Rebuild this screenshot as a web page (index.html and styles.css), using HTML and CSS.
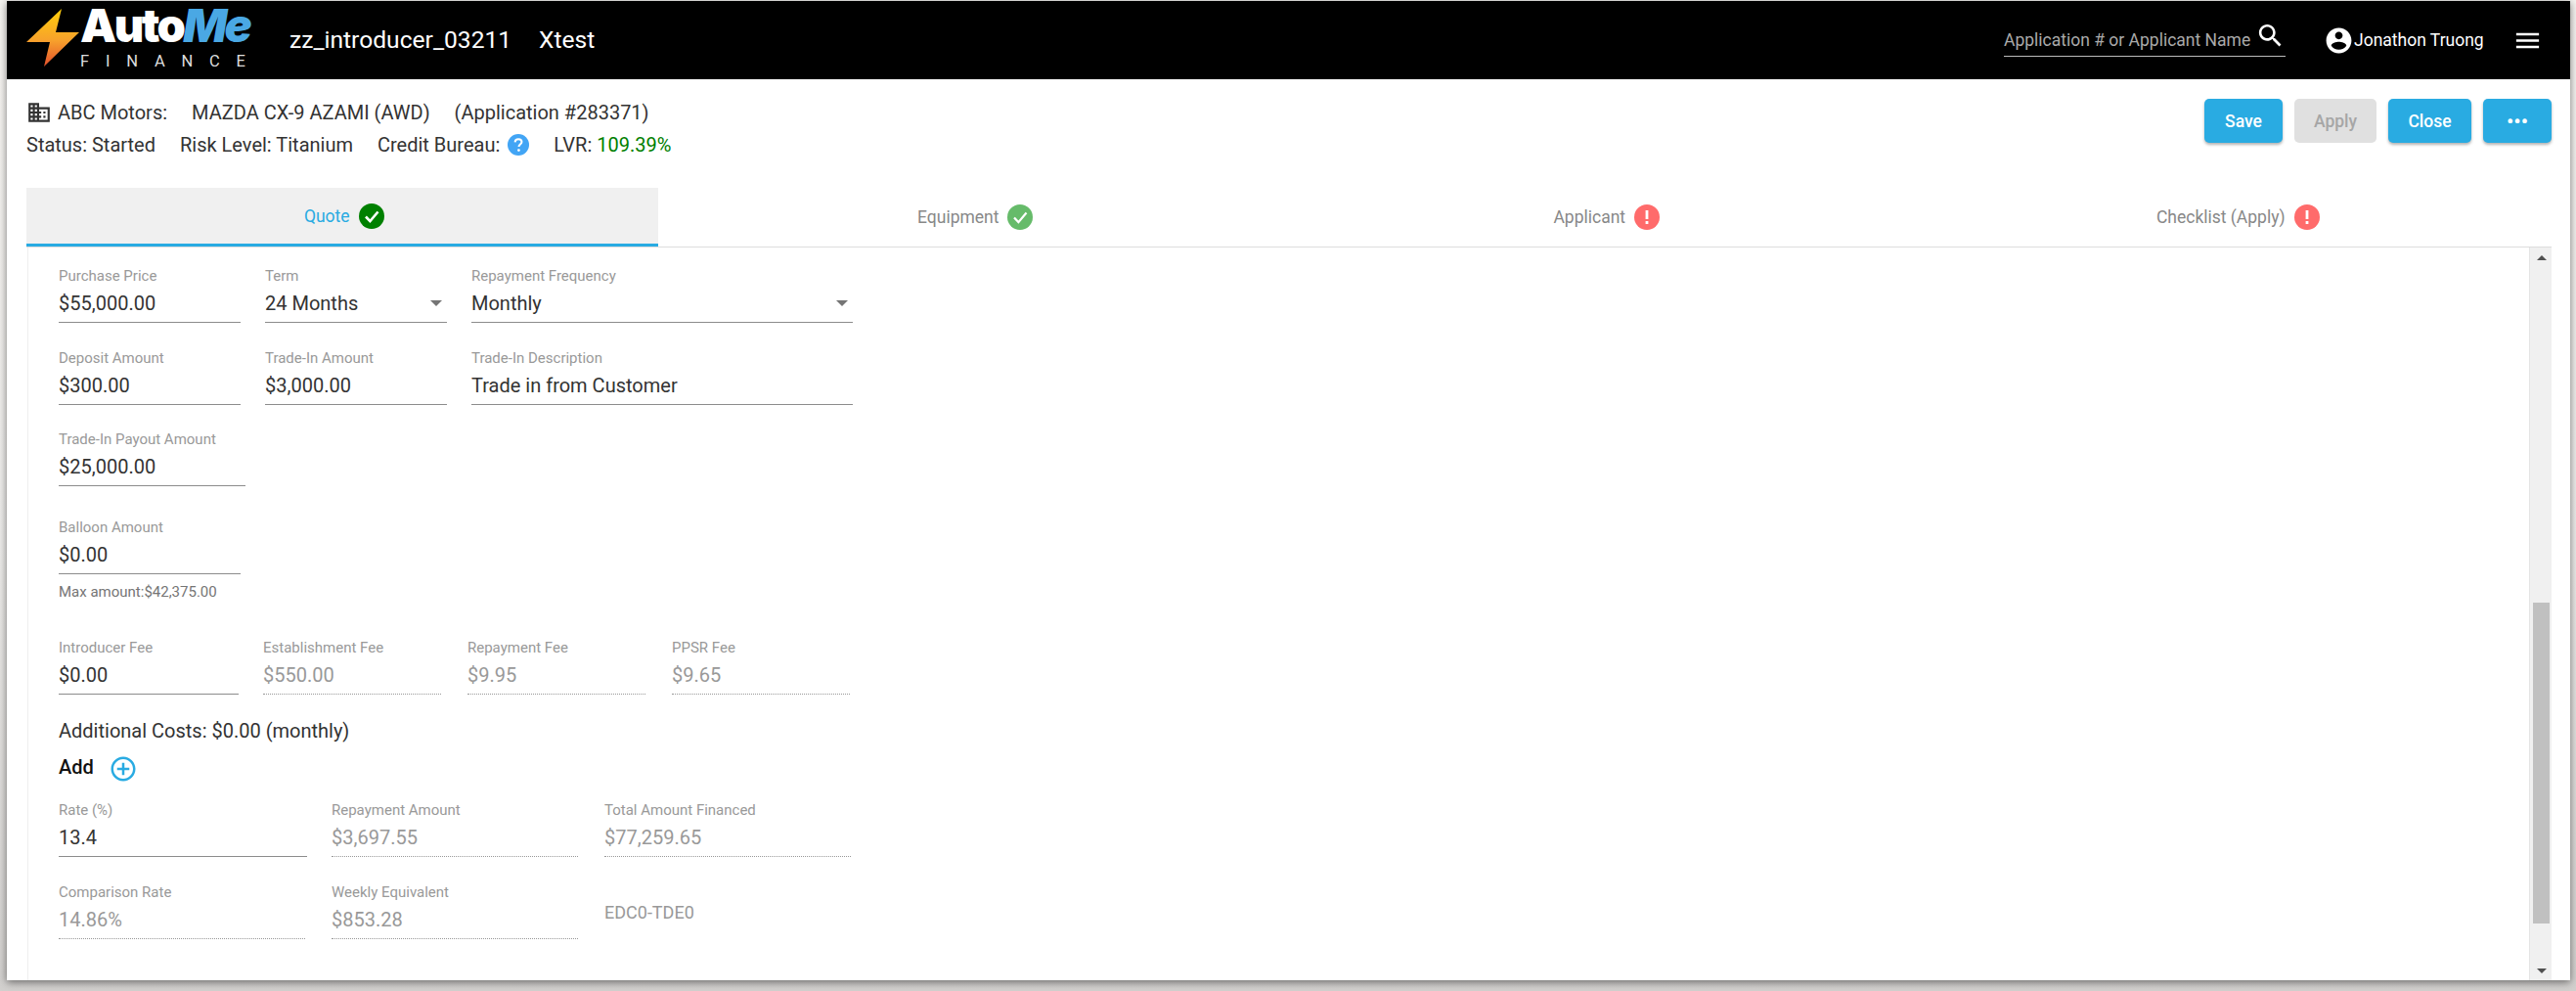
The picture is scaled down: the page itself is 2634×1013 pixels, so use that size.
FILE: index.html
```html
<!DOCTYPE html>
<html lang="en">
<head>
  <meta charset="UTF-8">
  <title>AutoMe Finance - Quote</title>
  <link rel="stylesheet" href="styles.css">
</head>
<body>
  <div class="modal">
    <header class="topbar">
      <div class="logo">
        <svg class="logo-bolt" width="54" height="60" viewBox="27 9 54 60">
          <defs>
            <linearGradient id="bolt" x1="0" y1="0" x2="0" y2="1">
              <stop offset="0" stop-color="#ffcf0a"/>
              <stop offset="0.55" stop-color="#f7a12c"/>
              <stop offset="1" stop-color="#e4502c"/>
            </linearGradient>
          </defs>
          <polygon points="63,9 27,43 51,43 45,68 81,33 57,33" fill="url(#bolt)"/>
        </svg>
        <div class="logo-text">
          <div class="logo-name">Auto<span class="logo-me">Me</span></div>
          <div class="logo-sub">FINANCE</div>
        </div>
      </div>
      <div class="topbar-title">zz_introducer_03211</div>
      <div class="topbar-title topbar-env">Xtest</div>

      <div class="search">
        <span class="search-text">Application # or Applicant Name</span>
        <svg class="search-icon" width="31" height="31" viewBox="0 0 24 24"><path fill="#fff" d="M15.5 14h-.79l-.28-.27C15.41 12.59 16 11.11 16 9.5 16 5.91 13.09 3 9.5 3S3 5.91 3 9.5 5.91 16 9.5 16c1.61 0 3.09-.59 4.23-1.57l.27.28v.79l5 4.99L20.49 19l-4.99-5zm-6 0C7.01 14 5 11.99 5 9.5S7.01 5 9.5 5 14 7.01 14 9.5 11.99 14 9.5 14z"/></svg>
      </div>
      <div class="user">
        <svg width="31" height="31" viewBox="0 0 24 24"><path fill="#fff" d="M12 2C6.48 2 2 6.48 2 12s4.48 10 10 10 10-4.48 10-10S17.52 2 12 2zm0 3c1.66 0 3 1.34 3 3s-1.34 3-3 3-3-1.34-3-3 1.34-3 3-3zm0 14.2c-2.5 0-4.71-1.28-6-3.22.03-1.99 4-3.08 6-3.08 1.99 0 5.97 1.09 6 3.08-1.29 1.94-3.5 3.22-6 3.22z"/></svg>
        <span>Jonathon Truong</span>
      </div>
      <svg class="menu-icon" width="31" height="31" viewBox="0 0 24 24"><path fill="#fff" d="M3 18h18v-2H3v2zm0-5h18v-2H3v2zm0-7v2h18V6H3z"/></svg>
    </header>

    <section class="info">
      <div class="info-text">
        <div class="info-title">
          <svg width="26" height="26" viewBox="0 0 24 24"><path fill="#333" d="M12 7V3H2v18h20V7H12zM6 19H4v-2h2v2zm0-4H4v-2h2v2zm0-4H4V9h2v2zm0-4H4V5h2v2zm4 12H8v-2h2v2zm0-4H8v-2h2v2zm0-4H8V9h2v2zm0-4H8V5h2v2zm10 12h-8v-2h2v-2h-2v-2h2v-2h-2V9h8v10zm-2-8h-2v2h2v-2zm0 4h-2v2h2v-2z"/></svg>
          <span class="dealer">ABC Motors:</span>
          <span class="vehicle">MAZDA CX-9 AZAMI (AWD)</span>
          <span class="app-no">(Application #283371)</span>
        </div>
        <div class="info-status">
          <span>Status: Started</span>
          <span>Risk Level: Titanium</span>
          <span class="bureau">Credit Bureau:
            <svg class="help-icon" width="22" height="22" viewBox="0 0 22 22">
              <circle cx="11" cy="11" r="11" fill="#42a5f5"/>
              <path d="M7.6 8.4c.1-2 1.5-3.2 3.5-3.2s3.4 1.2 3.4 2.9c0 2.4-3 2.6-3 5" fill="none" stroke="#fff" stroke-width="2"/>
              <circle cx="11.4" cy="16.6" r="1.4" fill="#fff"/>
            </svg>
          </span>
          <span>LVR: <span class="lvr">109.39%</span></span>
        </div>
      </div>
      <div class="actions">
        <button class="btn btn-save">Save</button>
        <button class="btn btn-apply" disabled>Apply</button>
        <button class="btn btn-close">Close</button>
        <button class="btn btn-more">•••</button>
      </div>
    </section>

    <nav class="tabs">
      <div class="tab tab-active">Quote
        <svg width="26" height="26" viewBox="0 0 26 26"><circle cx="13" cy="13" r="13" fill="#008000"/><path d="M7 13.5l4.4 4.6L19.5 8.5" fill="none" stroke="#fff" stroke-width="2.6"/></svg>
      </div>
      <div class="tab">Equipment
        <svg width="26" height="26" viewBox="0 0 26 26"><circle cx="13" cy="13" r="13" fill="#66bb6a"/><path d="M7 13.5l4.4 4.6L19.5 8.5" fill="none" stroke="#fff" stroke-width="2.2"/></svg>
      </div>
      <div class="tab">Applicant
        <svg width="26" height="26" viewBox="0 0 26 26"><circle cx="13" cy="13" r="13" fill="#ff6b6b"/><rect x="11.6" y="6" width="2.8" height="9" fill="#fff"/><rect x="11.6" y="17" width="2.8" height="3" fill="#fff"/></svg>
      </div>
      <div class="tab">Checklist (Apply)
        <svg width="26" height="26" viewBox="0 0 26 26"><circle cx="13" cy="13" r="13" fill="#ff6b6b"/><rect x="11.6" y="6" width="2.8" height="9" fill="#fff"/><rect x="11.6" y="17" width="2.8" height="3" fill="#fff"/></svg>
      </div>
    </nav>

    <div class="panel">
      <main class="form">
        <div class="row row-first">
          <div class="field"><label>Purchase Price</label><div class="value">$55,000.00</div></div>
          <div class="field"><label>Term</label><div class="value value-select">24 Months<span class="caret"></span></div></div>
          <div class="field"><label>Repayment Frequency</label><div class="value value-select">Monthly<span class="caret"></span></div></div>
        </div>
        <div class="row row-first row-tight">
          <div class="field"><label>Deposit Amount</label><div class="value">$300.00</div></div>
          <div class="field"><label>Trade-In Amount</label><div class="value">$3,000.00</div></div>
          <div class="field"><label>Trade-In Description</label><div class="value">Trade in from Customer</div></div>
        </div>
        <div class="row row-payout">
          <div class="field"><label>Trade-In Payout Amount</label><div class="value">$25,000.00</div></div>
        </div>
        <div class="row row-balloon">
          <div class="field"><label>Balloon Amount</label><div class="value">$0.00</div><div class="helper">Max amount:$42,375.00</div></div>
        </div>
        <div class="row row-fees">
          <div class="field"><label>Introducer Fee</label><div class="value">$0.00</div></div>
          <div class="field"><label>Establishment Fee</label><div class="value value-off">$550.00</div></div>
          <div class="field"><label>Repayment Fee</label><div class="value value-off">$9.95</div></div>
          <div class="field"><label>PPSR Fee</label><div class="value value-off">$9.65</div></div>
        </div>
        <div class="costs">Additional Costs: $0.00 (monthly)</div>
        <div class="add">Add
          <svg width="30" height="30" viewBox="0 0 24 24"><path fill="#29abe2" d="M13 7h-2v4H7v2h4v4h2v-4h4v-2h-4V7zm-1-5C6.48 2 2 6.48 2 12s4.48 10 10 10 10-4.48 10-10S17.52 2 12 2zm0 18c-4.41 0-8-3.59-8-8s3.59-8 8-8 8 3.59 8 8-3.59 8-8 8z"/></svg>
        </div>
        <div class="row row-rates">
          <div class="field"><label>Rate (%)</label><div class="value">13.4</div></div>
          <div class="field"><label>Repayment Amount</label><div class="value value-off">$3,697.55</div></div>
          <div class="field"><label>Total Amount Financed</label><div class="value value-off">$77,259.65</div></div>
        </div>
        <div class="row row-rates row-tight">
          <div class="field"><label>Comparison Rate</label><div class="value value-off">14.86%</div></div>
          <div class="field"><label>Weekly Equivalent</label><div class="value value-off">$853.28</div></div>
          <div class="code">EDC0-TDE0</div>
        </div>
      </main>
      <div class="scrollbar">
        <span class="arrow arrow-up"></span>
        <div class="thumb"></div>
        <span class="arrow arrow-down"></span>
      </div>
    </div>
  </div>
</body>
</html>
```

FILE: styles.css
```css
* {
  box-sizing: border-box;
}

html, body {
  margin: 0;
  height: 100%;
}

body {
  font-family: Roboto, "Liberation Sans", sans-serif;
  width: 2634px;
  height: 1013px;
  padding: 1px 6px 11px 7px;
  background: linear-gradient(#f5f3f0, #ecebe9 55%, #d2d0ce);
  overflow: hidden;
}

.modal {
  height: 1001px;
  background: #fff;
  display: flex;
  flex-direction: column;
  box-shadow: 0 2px 8px rgba(0,0,0,0.5);
}

/* top bar */
.topbar {
  height: 80px;
  flex: none;
  background: #000;
  color: #fff;
  display: flex;
  align-items: center;
  padding: 0 28px 0 20px;
}

.logo {
  display: flex;
  align-items: flex-start;
  height: 60px;
  width: 269px;
  margin-top: -4px;
}

.logo-bolt {
  flex: none;
}

.logo-text {
  margin-left: 1px;
}

.logo-name {
  font-family: Inter, Roboto, sans-serif;
  font-weight: 900;
  font-size: 47px;
  line-height: 34px;
  letter-spacing: -2.6px;
  color: #fff;
}

.logo-me {
  color: #4aa8e4;
  font-style: italic;
}

.logo-sub {
  font-size: 16.5px;
  line-height: 12px;
  margin-top: 14px;
  letter-spacing: 16.8px;
  color: #ddd;
  white-space: nowrap;
}

.topbar-title {
  font-size: 24.6px;
  line-height: 30px;
}

.topbar-env {
  margin-left: 28px;
}

.search {
  margin-left: auto;
  width: 288px;
  height: 34px;
  border-bottom: 1px solid #bbb;
  display: flex;
  align-items: flex-start;
  color: #aaa;
  font-size: 17.5px;
  line-height: 34px;
}

.search-text {
  flex: 1;
  white-space: nowrap;
}

.search-icon {
  margin-top: -3px;
}

.user {
  margin-left: 39px;
  display: flex;
  align-items: center;
  font-size: 17.5px;
  width: 176px;
}

.menu-icon {
  margin-left: 17px;
}

/* info strip */
.info {
  height: 111px;
  flex: none;
  display: flex;
  justify-content: space-between;
  padding: 20px 19px 0 20px;
}

.info-title {
  display: flex;
  align-items: center;
  height: 28px;
  font-size: 20px;
  color: #333;
}

.info-title svg {
  margin-right: 6px;
}

.vehicle {
  margin-left: 25px;
}

.app-no {
  margin-left: 25px;
}

.info-status {
  display: flex;
  align-items: center;
  height: 26px;
  margin-top: 6px;
  gap: 25px;
  font-size: 20px;
  color: #333;
}

.bureau {
  display: flex;
  align-items: center;
  gap: 8px;
}

.lvr {
  color: #008000;
}

.actions {
  display: flex;
  gap: 12px;
}

.btn {
  height: 45px;
  border: none;
  border-radius: 5px;
  font-family: inherit;
  font-size: 17.5px;
  font-weight: 500;
  color: #fff;
  background: #29abe2;
  box-shadow: 0 2px 3px rgba(0,0,0,0.3);
  padding: 0;
}

.btn-save {
  width: 80px;
}

.btn-apply {
  width: 84px;
  background: #e0e0e0;
  color: #a6a6a6;
  box-shadow: none;
}

.btn-close {
  width: 85px;
}

.btn-more {
  width: 70px;
  font-size: 21px;
}

/* tabs */
.tabs {
  margin: 0 19px 0 20px;
  display: grid;
  grid-template-columns: repeat(4, 1fr);
  height: 61px;
  flex: none;
  border-bottom: 1px solid #ddd;
}

.tab {
  display: flex;
  align-items: center;
  justify-content: center;
  gap: 9px;
  font-size: 17.5px;
  color: #888;
  padding-left: 4px;
}

.tab-active {
  background: #f0f0f0;
  color: #29abe2;
  border-bottom: 3px solid #29abe2;
}

/* scrolling form */
.panel {
  flex: 1;
  display: flex;
  margin: 0 19px 0 21px;
  border-left: 1px solid #eee;
  min-height: 0;
}

.form {
  flex: 1;
  padding: 20px 0 0 31px;
}

.row {
  display: grid;
  gap: 25px;
}

.row-first {
  grid-template-columns: 186px 186px 390px;
}

.row-tight {
  margin-top: 27px;
}

.row-payout {
  grid-template-columns: 191px;
  margin-top: 26px;
}

.row-balloon {
  grid-template-columns: 186px;
  margin-top: 33px;
}

.row-fees {
  grid-template-columns: 184px 184px 184px 184px;
  margin-top: 39px;
}

.row-rates {
  grid-template-columns: 254px 254px 254px;
  margin-top: 20px;
}

.row-rates.row-tight {
  margin-top: 27px;
}

.field label {
  display: block;
  font-size: 15px;
  line-height: 18px;
  color: #999;
}

.value {
  height: 39px;
  line-height: 38px;
  font-size: 20px;
  color: #333;
  border-bottom: 1px solid #8c8c8c;
  display: flex;
  justify-content: space-between;
  align-items: center;
}

.value-off {
  color: #999;
  border-bottom: 1px dotted #999;
  margin-right: 2px;
}

.value-select {
  padding-right: 5px;
}

.caret {
  width: 0;
  height: 0;
  border-left: 6px solid transparent;
  border-right: 6px solid transparent;
  border-top: 6px solid #757575;
}

.helper {
  font-size: 15px;
  line-height: 18px;
  margin-top: 9px;
  color: #757575;
}

.costs {
  font-size: 20px;
  line-height: 24px;
  margin-top: 25px;
  color: #333;
}

.add {
  display: flex;
  align-items: center;
  gap: 15px;
  font-size: 20px;
  font-weight: 500;
  height: 30px;
  margin-top: 10px;
  color: #111;
}

.add svg {
  margin-top: 4px;
}

.code {
  font-size: 18px;
  color: #999;
  margin-top: 19px;
}

.scrollbar {
  width: 23px;
  flex: none;
  background: #f0f0f0;
  border-left: 1px solid #e4e4e4;
  display: flex;
  flex-direction: column;
  align-items: center;
  padding: 8px 2px 7px 3px;
}

.arrow {
  width: 0;
  height: 0;
  border-left: 5px solid transparent;
  border-right: 5px solid transparent;
}

.arrow-up {
  border-bottom: 5px solid #505050;
}

.arrow-down {
  border-top: 5px solid #505050;
}

.thumb {
  width: 17px;
  height: 328px;
  margin-top: auto;
  margin-bottom: 46px;
  background: #c0c0c0;
}
```
